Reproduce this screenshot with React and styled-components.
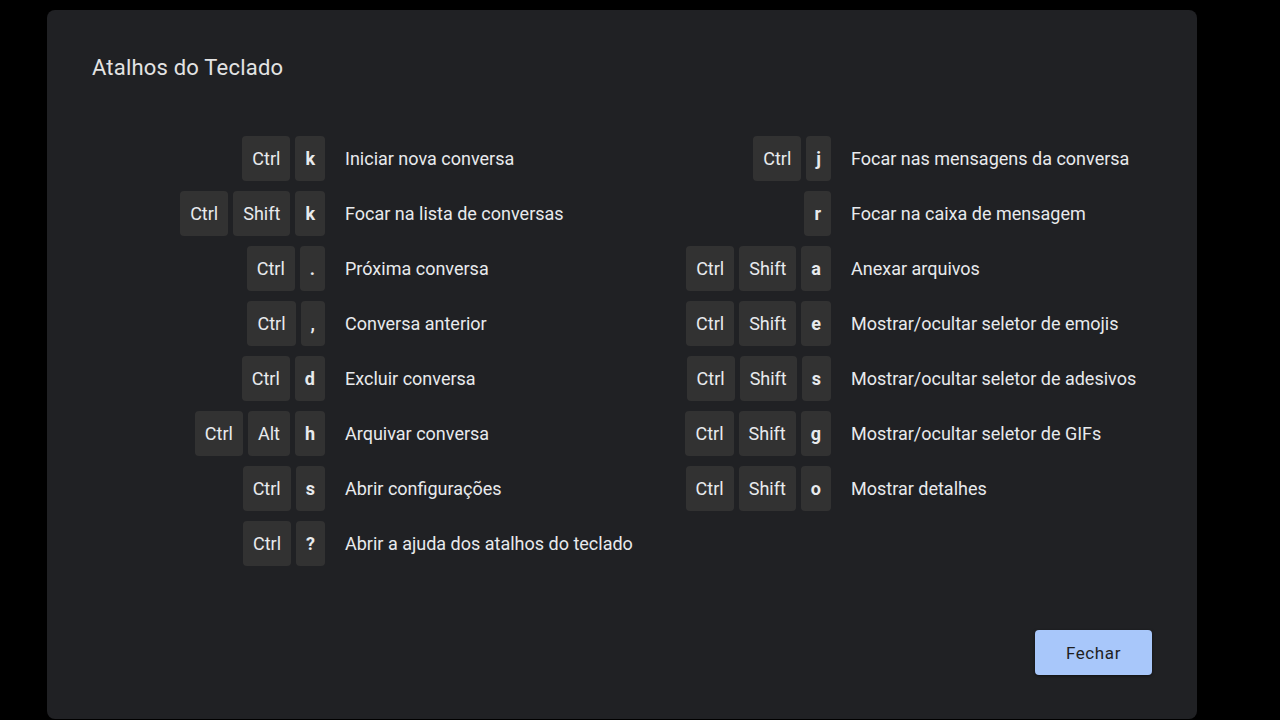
import React from "react";
import styled, { createGlobalStyle } from "styled-components";

const Global = createGlobalStyle`
  html, body { margin: 0; padding: 0; background: #000; }
  body { font-family: Roboto, "Liberation Sans", sans-serif; }
`;

const Dialog = styled.div`
  box-sizing: border-box;
  margin: 10px 0 0 47px;
  width: 1150px;
  padding: 44px 45px 44px 45px;
  background: #202124;
  border-radius: 8px;
  display: flex;
  flex-direction: column;
`;

const Title = styled.h2`
  margin: 0;
  font-family: Roboto, "Liberation Sans", sans-serif;
  font-weight: 400;
  font-size: 22px;
  line-height: 28px;
  color: #e3e3e3;
  letter-spacing: 0.2px;
`;

const Columns = styled.div`
  display: flex;
  margin-top: 54px;
  column-gap: 20px;
`;

const Column = styled.div`
  display: grid;
  grid-template-columns: ${(p) => p.$keys}px 1fr;
  grid-auto-rows: 45px;
  column-gap: 20px;
  row-gap: 10px;
  width: ${(p) => p.$width}px;
  align-content: start;
`;

const Keys = styled.div`
  display: flex;
  justify-content: flex-end;
  gap: 5px;
`;

const Key = styled.kbd`
  box-sizing: border-box;
  height: 45px;
  padding: 0 10px;
  display: flex;
  align-items: center;
  justify-content: center;
  background: #323232;
  border-radius: 4px;
  color: #e8eaed;
  font-family: Roboto, "Liberation Sans", sans-serif;
  font-size: 18px;
  font-weight: ${(p) => (p.$bold ? 700 : 400)};
`;

const Desc = styled.div`
  display: flex;
  align-items: center;
  color: #e8eaed;
  font-size: 18px;
  white-space: nowrap;
`;

const Footer = styled.div`
  display: flex;
  justify-content: flex-end;
  margin-top: 64px;
`;

const Button = styled.button`
  width: 117px;
  height: 45px;
  padding: 0;
  border: none;
  border-radius: 4px;
  background: #a8c7fa;
  color: #1f1f1f;
  font-family: Roboto, "Liberation Sans", sans-serif;
  font-size: 17px;
  letter-spacing: 0.6px;
  box-shadow: 0 1px 3px rgba(0, 0, 0, 0.5);
  cursor: pointer;
`;

const left = [
  [["Ctrl", "k"], "Iniciar nova conversa"],
  [["Ctrl", "Shift", "k"], "Focar na lista de conversas"],
  [["Ctrl", "."], "Próxima conversa"],
  [["Ctrl", ","], "Conversa anterior"],
  [["Ctrl", "d"], "Excluir conversa"],
  [["Ctrl", "Alt", "h"], "Arquivar conversa"],
  [["Ctrl", "s"], "Abrir configurações"],
  [["Ctrl", "?"], "Abrir a ajuda dos atalhos do teclado"],
];

const right = [
  [["Ctrl", "j"], "Focar nas mensagens da conversa"],
  [["r"], "Focar na caixa de mensagem"],
  [["Ctrl", "Shift", "a"], "Anexar arquivos"],
  [["Ctrl", "Shift", "e"], "Mostrar/ocultar seletor de emojis"],
  [["Ctrl", "Shift", "s"], "Mostrar/ocultar seletor de adesivos"],
  [["Ctrl", "Shift", "g"], "Mostrar/ocultar seletor de GIFs"],
  [["Ctrl", "Shift", "o"], "Mostrar detalhes"],
];

const modifiers = ["Ctrl", "Shift", "Alt"];

function ShortcutList({ items, keysWidth, width }) {
  return (
    <Column $keys={keysWidth} $width={width}>
      {items.map(([keys, label]) => (
        <React.Fragment key={label}>
          <Keys>
            {keys.map((k) => (
              <Key key={k} $bold={!modifiers.includes(k)}>
                {k}
              </Key>
            ))}
          </Keys>
          <Desc>{label}</Desc>
        </React.Fragment>
      ))}
    </Column>
  );
}

export default function App() {
  return (
    <>
      <Global />
      <Dialog>
        <Title>Atalhos do Teclado</Title>
        <Columns>
          <ShortcutList items={left} keysWidth={233} width={569} />
          <ShortcutList items={right} keysWidth={150} width={471} />
        </Columns>
        <Footer>
          <Button>Fechar</Button>
        </Footer>
      </Dialog>
    </>
  );
}
